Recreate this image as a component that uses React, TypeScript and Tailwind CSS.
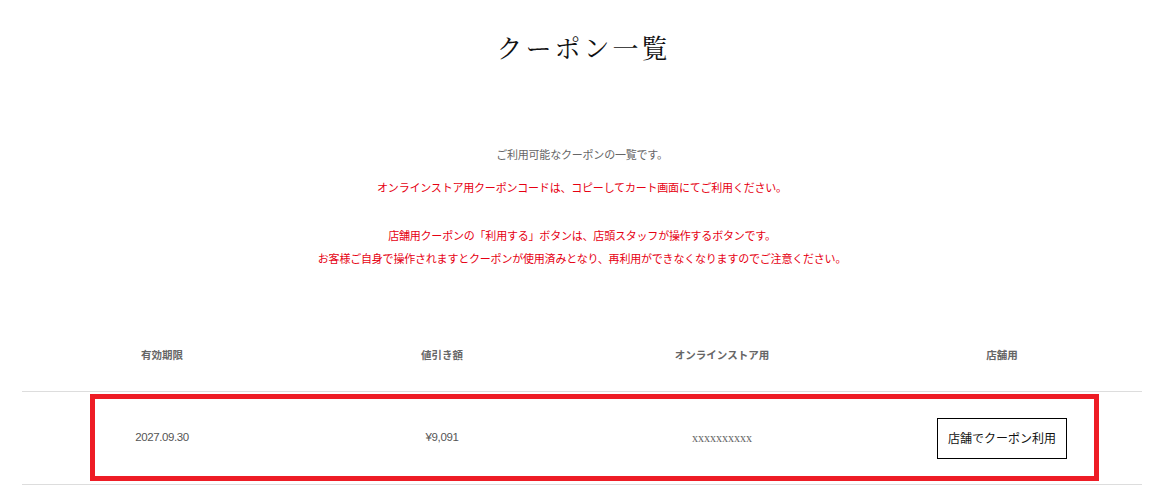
const jp = "font-['Noto_Sans_CJK_JP',sans-serif]";

const columns = ["有効期限", "値引き額", "オンラインストア用", "店舗用"];

export default function App() {
  return (
    <div className={`min-h-[495px] w-[1164px] bg-white ${jp}`}>
      <h1 className="pt-[29px] pl-[3px] text-center font-['Noto_Serif_CJK_JP','Liberation_Serif',serif] text-[26px] leading-[36px] tracking-[3px] text-[#111]">
        クーポン一覧
      </h1>

      <div className="mt-[79px] text-center text-[11px] tracking-[-0.2px]">
        <p className="leading-[20px] text-[#666]">ご利用可能なクーポンの一覧です。</p>
        <p className="mt-[13px] leading-[20px] text-[#e60012]">
          オンラインストア用クーポンコードは、コピーしてカート画面にてご利用ください。
        </p>
        <p className="mt-[27px] leading-[23px] text-[#e60012]">
          店舗用クーポンの「利用する」ボタンは、店頭スタッフが操作するボタンです。
          <br />
          お客様ご自身で操作されますとクーポンが使用済みとなり、再利用ができなくなりますのでご注意ください。
        </p>
      </div>

      <div className="ml-[22px] mt-[51px] w-[1120px]">
        <div className="grid h-[71px] grid-cols-4 items-center border-b border-[#dddddd] text-center text-[10.5px] font-bold text-[#666]">
          {columns.map((c) => (
            <div key={c} className="pb-[2px]">
              {c}
            </div>
          ))}
        </div>

        <div className="relative grid h-[93px] grid-cols-4 items-center border-b border-[#dddddd] text-center">
          <div className="font-['Liberation_Sans',sans-serif] text-[11.5px] tracking-[-0.4px] text-[#555]">
            2027.09.30
          </div>
          <div className="font-['Liberation_Sans',sans-serif] text-[11.5px] tracking-[-0.4px] text-[#555]">
            ¥9,091
          </div>
          <div className="font-['Liberation_Serif',serif] text-[12px] text-[#666]">xxxxxxxxxx</div>
          <div className="flex justify-center">
            <button className="h-[41px] w-[130px] border border-black bg-white text-[12px] text-[#111]">
              店舗でクーポン利用
            </button>
          </div>

          <div className="pointer-events-none absolute left-[68px] top-[2px] h-[87px] w-[1009px] border-[5px] border-[#ee1c25]" />
        </div>
      </div>
    </div>
  );
}
